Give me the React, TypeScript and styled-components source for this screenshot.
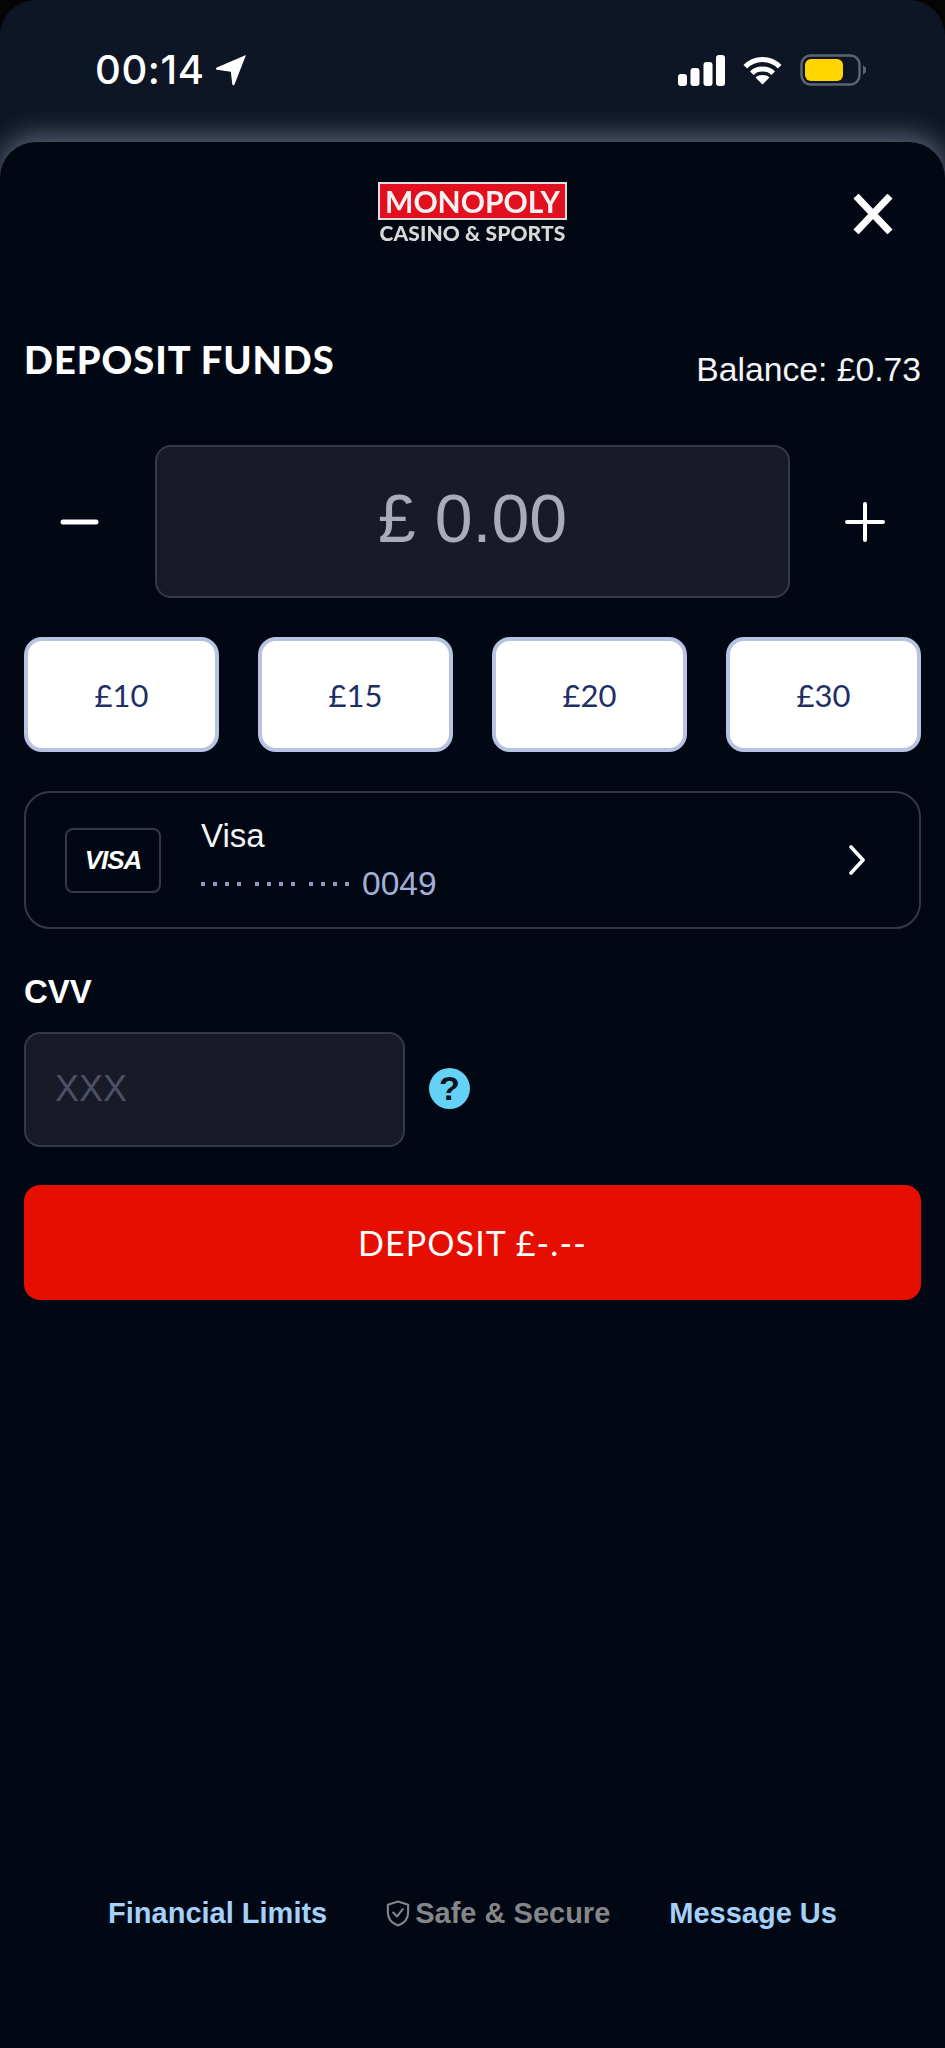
import React from "react";
import styled, { createGlobalStyle } from "styled-components";

const GlobalStyle = createGlobalStyle`
  html, body {
    margin: 0;
    padding: 0;
    background: #050505;
  }
  * {
    box-sizing: border-box;
  }
`;

const Phone = styled.div`
  width: 945px;
  height: 2048px;
  display: flex;
  flex-direction: column;
  background: #0e1626;
  border-radius: 36px 36px 0 0;
  overflow: hidden;
  font-family: "Liberation Sans", Arial, sans-serif;
  color: #fff;
`;

const StatusBar = styled.div`
  height: 142px;
  flex: none;
  display: flex;
  justify-content: space-between;
  align-items: flex-start;
  padding: 48px 79px 0 95px;
`;

const StatusTime = styled.div`
  display: flex;
  align-items: center;
  gap: 10px;
  font-family: Inter, "Liberation Sans", sans-serif;
  font-size: 40px;
  line-height: 44px;
  font-weight: 500;
  letter-spacing: 0.6px;
`;

const StatusIcons = styled.div`
  display: flex;
  align-items: center;
  gap: 18px;
  height: 44px;
`;

const Sheet = styled.div`
  flex: 1;
  display: flex;
  flex-direction: column;
  background: #010813;
  border-radius: 36px 36px 0 0;
  box-shadow: 0 -6px 28px rgba(200, 210, 230, 0.42);
  padding: 0 24px 118px;
`;

const TopBar = styled.div`
  height: 102px;
  flex: none;
  display: flex;
  justify-content: center;
  align-items: flex-end;
  position: relative;
`;

const Logo = styled.div`
  width: 190px;
  display: flex;
  flex-direction: column;
  align-items: center;
  filter: blur(0.35px);
`;

const LogoBox = styled.div`
  width: 189px;
  height: 38px;
  display: flex;
  align-items: center;
  justify-content: center;
  background: #e2101f;
  border: 2px solid #e0e0e0;
  font-family: Lato, sans-serif;
  font-size: 30px;
  font-weight: 700;
  color: #f2f2f2;
`;

const LogoSub = styled.div`
  margin-top: 2px;
  font-family: Lato, sans-serif;
  font-size: 21px;
  line-height: 22px;
  font-weight: 900;
  letter-spacing: 0.1px;
  color: #d8d8d8;
  white-space: nowrap;
`;

const CloseButton = styled.div`
  position: absolute;
  right: 28px;
  top: 52px;
  width: 40px;
  height: 40px;
`;

const TitleRow = styled.div`
  margin-top: 93px;
  display: flex;
  justify-content: space-between;
  align-items: flex-start;
`;

const Title = styled.h1`
  margin: 0;
  font-family: Lato, sans-serif;
  font-size: 38px;
  line-height: 44px;
  font-weight: 900;
  letter-spacing: 1px;
`;

const Balance = styled.div`
  margin-top: 12px;
  font-size: 33.7px;
  line-height: 40px;
  color: #f4f5f7;
`;

const AmountRow = styled.div`
  margin-top: 56px;
  display: flex;
  align-items: center;
  justify-content: space-between;
  padding: 0 36px 0 36px;
`;

const Stepper = styled.div`
  width: 40px;
  height: 40px;
  flex: none;
`;

const FieldBox = styled.div<{ $width: number; $height: number }>`
  width: ${(p) => p.$width}px;
  height: ${(p) => p.$height}px;
  display: flex;
  align-items: center;
  background: #181a28;
  border: 2px solid #363945;
  border-radius: 16px;
`;

const AmountField = styled(FieldBox)`
  justify-content: center;
  font-size: 68px;
  color: #a9abb8;
  padding-bottom: 7px;
`;

const QuickRow = styled.div`
  margin-top: 39px;
  display: grid;
  grid-template-columns: repeat(4, 195px);
  justify-content: space-between;
`;

const QuickButton = styled.div`
  height: 115px;
  display: flex;
  align-items: center;
  justify-content: center;
  background: #fff;
  border: 4px solid #b7c3e0;
  border-radius: 18px;
  font-family: Lato, sans-serif;
  font-size: 31px;
  color: #1e2f63;
`;

const CardRow = styled.div`
  margin-top: 39px;
  height: 138px;
  display: flex;
  align-items: center;
  border: 2px solid #363945;
  border-radius: 26px;
  padding: 0 53px 0 39px;
`;

const CardLogo = styled.div`
  width: 96px;
  height: 65px;
  flex: none;
  display: flex;
  align-items: center;
  justify-content: center;
  border: 2px solid #363945;
  border-radius: 8px;
  font-size: 26px;
  font-weight: 700;
  font-style: italic;
  letter-spacing: -1px;
`;

const CardText = styled.div`
  margin-left: 40px;
  flex: 1;
  display: flex;
  flex-direction: column;
  gap: 8px;
`;

const CardName = styled.div`
  font-size: 33px;
  line-height: 40px;
  color: #f4f5f7;
`;

const CardNumber = styled.div`
  font-size: 33.5px;
  line-height: 40px;
  color: #a3afd8;
  display: flex;
  align-items: center;
  gap: 13px;
`;

const MaskGroup = styled.div`
  display: flex;
  gap: 14px;
`;

const MaskDots = styled.div`
  display: flex;
  gap: 8px;
`;

const MaskDot = styled.span`
  width: 4px;
  height: 4px;
  background: #8e99c2;
`;

const CvvLabel = styled.div`
  margin-top: 43px;
  font-size: 33px;
  line-height: 40px;
  font-weight: 700;
`;

const CvvRow = styled.div`
  margin-top: 20px;
  display: flex;
  align-items: center;
  gap: 24px;
`;

const CvvField = styled(FieldBox)`
  padding-left: 29px;
  padding-bottom: 2px;
  font-size: 36px;
  color: #4d5066;
`;

const HelpIcon = styled.div`
  width: 41px;
  height: 41px;
  margin-bottom: 3px;
  border-radius: 50%;
  display: flex;
  align-items: center;
  justify-content: center;
  background: #63d2f6;
  color: #0a1320;
  font-size: 34px;
  font-weight: 700;
`;

const DepositButton = styled.div`
  margin-top: 38px;
  height: 115px;
  display: flex;
  align-items: center;
  justify-content: center;
  background: #e50e00;
  border-radius: 16px;
  font-family: Lato, sans-serif;
  font-size: 34px;
  font-weight: 400;
  letter-spacing: 1.1px;
  color: #fff;
`;

const Footer = styled.div`
  margin-top: auto;
  display: flex;
  align-items: center;
  justify-content: center;
  gap: 59px;
  font-size: 29px;
  line-height: 34px;
  font-weight: 700;
`;

const FooterLink = styled.div`
  color: #a3d1fb;
`;

const SafeBadge = styled.div`
  display: flex;
  align-items: center;
  gap: 5px;
  color: #848689;
`;

const Signal = () => (
  <svg width="47" height="31" viewBox="0 0 47 31" fill="#fff">
    <rect x="0" y="19" width="9" height="12" rx="3" />
    <rect x="12.5" y="13" width="9" height="18" rx="3" />
    <rect x="25.5" y="7" width="9" height="24" rx="3" />
    <rect x="38" y="0" width="9" height="31" rx="3" />
  </svg>
);

const Wifi = () => (
  <svg width="39" height="31" viewBox="0 0 42 32" fill="none" stroke="#fff" strokeWidth="5.4">
    <path d="M2.5 12 C12.5 1.5 29.5 1.5 39.5 12" />
    <path d="M9.5 19 C15 13 27 13 32.5 19" />
    <path d="M21 31 L13.5 23.5 C17.5 20 24.5 20 28.5 23.5 Z" fill="#fff" stroke="none" />
  </svg>
);

const Battery = () => (
  <svg width="66" height="32" viewBox="0 0 66 32" fill="none">
    <rect x="1.5" y="1.5" width="58" height="29" rx="9" stroke="#5b6472" strokeWidth="2.5" />
    <rect x="5" y="5" width="38" height="22" rx="6" fill="#ffd500" />
    <path d="M63 11 L66 14 V18 L63 21 Z" fill="#5b6472" />
  </svg>
);

const LocationArrow = () => (
  <svg width="32" height="32" viewBox="0 0 32 32" fill="#fff">
    <path d="M31 1 L19.5 30.5 C19 31.8 17.5 31.5 17.3 30.2 L15.8 17.8 L2 15.8 C0.7 15.6 0.6 14.2 1.8 13.5 Z" />
  </svg>
);

const MinusIcon = () => (
  <svg width="40" height="40" viewBox="0 0 40 40" stroke="#fff" strokeWidth="5" strokeLinecap="round">
    <path d="M3 20 H36" />
  </svg>
);

const PlusIcon = () => (
  <svg width="40" height="40" viewBox="0 0 40 40" stroke="#fff" strokeWidth="4" strokeLinecap="round">
    <path d="M2 20 H38 M20 2 V38" />
  </svg>
);

const CloseIcon = () => (
  <svg width="40" height="40" viewBox="0 0 40 40" stroke="#fff" strokeWidth="7">
    <path d="M3 2 L37 38 M37 2 L3 38" />
  </svg>
);

const Chevron = () => (
  <svg width="18" height="30" viewBox="0 0 18 30" fill="none" stroke="#fff" strokeWidth="3.6" strokeLinecap="round" strokeLinejoin="round">
    <path d="M3 2 L15 15 L3 28" />
  </svg>
);

const ShieldIcon = () => (
  <svg width="24" height="27" viewBox="0 0 24 28" fill="none" stroke="#848689" strokeWidth="2.2" strokeLinejoin="round" strokeLinecap="round">
    <path d="M12 1.5 L22.5 5 V13 C22.5 20 17.5 24.5 12 26.5 C6.5 24.5 1.5 20 1.5 13 V5 Z" />
    <path d="M7 13 L11 17 L17 9.5" />
  </svg>
);

const amounts = ["£10", "£15", "£20", "£30"];

const App = () => {
  return (
    <Phone>
      <GlobalStyle />
      <StatusBar>
        <StatusTime>
          00:14
          <LocationArrow />
        </StatusTime>
        <StatusIcons>
          <Signal />
          <Wifi />
          <Battery />
        </StatusIcons>
      </StatusBar>
      <Sheet>
        <TopBar>
          <Logo>
            <LogoBox>MONOPOLY</LogoBox>
            <LogoSub>CASINO &amp; SPORTS</LogoSub>
          </Logo>
          <CloseButton>
            <CloseIcon />
          </CloseButton>
        </TopBar>
        <TitleRow>
          <Title>DEPOSIT FUNDS</Title>
          <Balance>Balance: £0.73</Balance>
        </TitleRow>
        <AmountRow>
          <Stepper>
            <MinusIcon />
          </Stepper>
          <AmountField $width={635} $height={153}>£ 0.00</AmountField>
          <Stepper>
            <PlusIcon />
          </Stepper>
        </AmountRow>
        <QuickRow>
          {amounts.map((a) => (
            <QuickButton key={a}>{a}</QuickButton>
          ))}
        </QuickRow>
        <CardRow>
          <CardLogo>VISA</CardLogo>
          <CardText>
            <CardName>Visa</CardName>
            <CardNumber>
              <MaskGroup>
                {[0, 1, 2].map((g) => (
                  <MaskDots key={g}>
                    {[0, 1, 2, 3].map((d) => (
                      <MaskDot key={d} />
                    ))}
                  </MaskDots>
                ))}
              </MaskGroup>
              0049
            </CardNumber>
          </CardText>
          <Chevron />
        </CardRow>
        <CvvLabel>CVV</CvvLabel>
        <CvvRow>
          <CvvField $width={381} $height={115}>XXX</CvvField>
          <HelpIcon>?</HelpIcon>
        </CvvRow>
        <DepositButton>DEPOSIT £-.--</DepositButton>
        <Footer>
          <FooterLink>Financial Limits</FooterLink>
          <SafeBadge>
            <ShieldIcon />
            Safe &amp; Secure
          </SafeBadge>
          <FooterLink>Message Us</FooterLink>
        </Footer>
      </Sheet>
    </Phone>
  );
};

export default App;
